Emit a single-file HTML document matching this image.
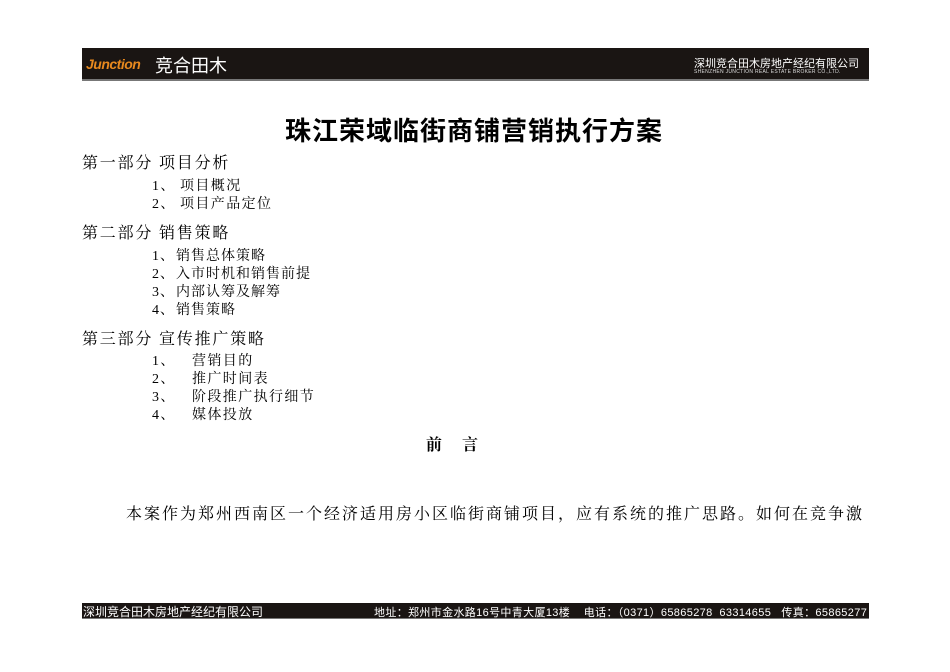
<!DOCTYPE html>
<html><head><meta charset="utf-8"><style>
body{margin:0;width:950px;height:672px;background:#fff;position:relative;overflow:hidden;font-family:"Liberation Serif","Noto Serif CJK SC",serif;color:#000}
.a{position:absolute;white-space:nowrap}
.s{font-family:"Liberation Sans","Noto Sans CJK SC",sans-serif}
.l{font-size:14px;line-height:18px;letter-spacing:1.4px}
.l span{display:inline-block}
</style></head><body>
<div class="a" style="left:82px;top:48px;width:787px;height:31px;background:#1a1513;border-bottom:2px solid #777"></div>
<div class="a s" style="left:86px;top:56px;font-size:14px;font-weight:bold;font-style:italic;color:#e8891e;letter-spacing:-0.5px">Junction</div>
<div class="a s" style="left:155px;top:52px;font-size:18px;color:#fff">竞合田木</div>
<div class="a s" style="left:694px;top:55px;font-size:11px;color:#fff">深圳竞合田木房地产经纪有限公司</div>
<div class="a s" style="left:694px;top:69px;font-size:5px;color:#ddd;letter-spacing:0.3px">SHENZHEN JUNCTION REAL ESTATE BROKER CO.,LTD.</div>
<div class="a s" style="left:285px;top:111px;font-size:26px;font-weight:bold;letter-spacing:1px;font-family:'Noto Sans CJK SC',sans-serif">珠江荣域临街商铺营销执行方案</div>
<div class="a" style="left:82px;top:150px;font-size:16px;letter-spacing:1.8px">第一部分 项目分析</div>
<div class="a l" style="left:152px;top:178px"><span style="width:28px">1、</span>项目概况<br><span style="width:28px">2、</span>项目产品定位</div>
<div class="a" style="left:82px;top:220px;font-size:16px;letter-spacing:1.8px">第二部分 销售策略</div>
<div class="a l" style="left:152px;top:248px;letter-spacing:1px"><span style="width:24px">1、</span>销售总体策略<br><span style="width:24px">2、</span>入市时机和销售前提<br><span style="width:24px">3、</span>内部认筹及解筹<br><span style="width:24px">4、</span>销售策略</div>
<div class="a" style="left:82px;top:326px;font-size:16px;letter-spacing:1.8px">第三部分 宣传推广策略</div>
<div class="a l" style="left:152px;top:353px"><span style="width:40px">1、</span>营销目的<br><span style="width:40px">2、</span>推广时间表<br><span style="width:40px">3、</span>阶段推广执行细节<br><span style="width:40px">4、</span>媒体投放</div>
<div class="a" style="left:426px;top:432px;font-size:16px;font-weight:bold">前&nbsp;&nbsp;&nbsp;&nbsp;&nbsp;言</div>
<div class="a" style="left:126px;top:501px;font-size:16px;letter-spacing:2px">本案作为郑州西南区一个经济适用房小区临街商铺项目，应有系统的推广思路。如何在竞争激</div>
<div class="a" style="left:82px;top:603px;width:787px;height:15px;background:#1a1513;border-bottom:1px solid #777"></div>
<div class="a s" style="left:83px;top:603px;font-size:12px;color:#fff">深圳竞合田木房地产经纪有限公司</div>
<div class="a s" style="left:374px;top:604px;font-size:11px;color:#fff;letter-spacing:0.35px">地址：郑州市金水路16号中青大厦13楼&nbsp;&nbsp;&nbsp;&nbsp;电话：（0371）65865278&nbsp;&nbsp;63314655&nbsp;&nbsp;&nbsp;传真：65865277</div>
</body></html>
